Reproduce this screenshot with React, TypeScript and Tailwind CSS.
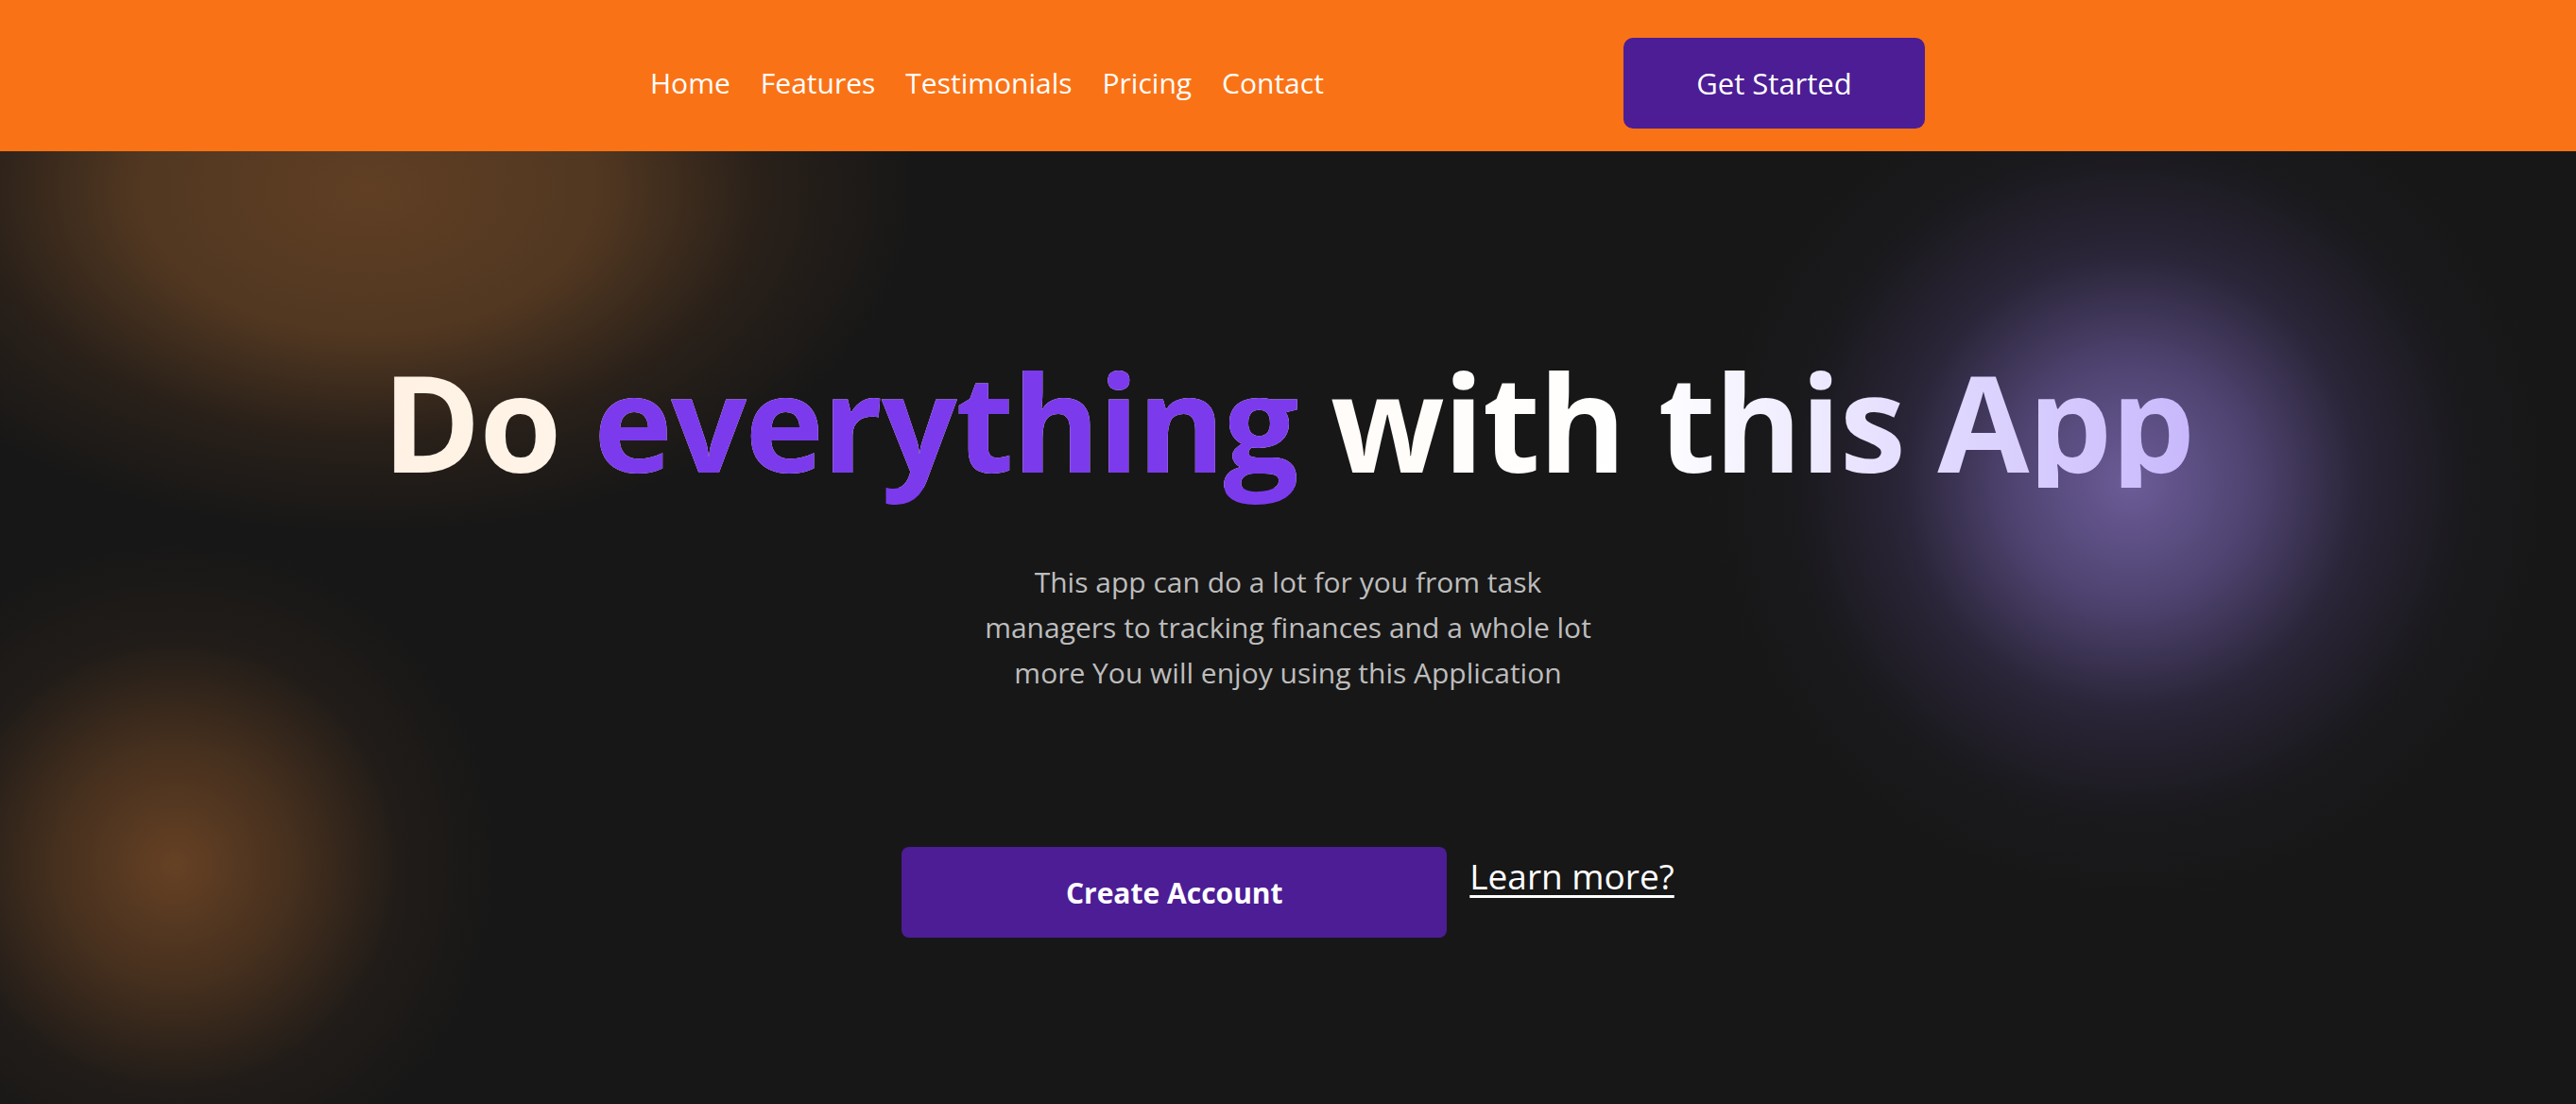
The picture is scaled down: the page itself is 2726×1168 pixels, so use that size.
const links = ['Home', 'Features', 'Testimonials', 'Pricing', 'Contact']

export default function App() {
  return (
    <div className="h-[1168px] w-full overflow-hidden bg-[#171717] font-['Open_Sans','Noto_Sans',sans-serif]">
      {/* Nav */}
      <nav className="relative z-10 flex h-[160px] items-center bg-[#f97316] pt-[16px]">
        <div className="flex w-[1718px] items-center gap-[32px] pl-[688px]">
          {links.map((l) => (
            <a key={l} href="#" className="text-[30px] leading-none text-white">
              {l}
            </a>
          ))}
        </div>
        <button className="h-[96px] w-[319px] rounded-[10px] bg-[#4c1d95] text-[31px] text-white">
          Get Started
        </button>
      </nav>

      {/* Hero */}
      <section className="relative flex h-[1008px] flex-col items-center">
        {/* glow blobs */}
        <div className="pointer-events-none absolute left-[-180px] top-[-320px] h-[720px] w-[1140px] bg-[radial-gradient(ellipse_at_center,rgba(96,63,36,1)_0%,rgba(88,59,34,0.9)_30%,rgba(55,39,27,0.55)_52%,rgba(23,23,23,0)_72%)]" />
        <div className="pointer-events-none absolute left-[-165px] top-[405px] h-[700px] w-[700px] bg-[radial-gradient(circle_at_center,rgba(102,65,36,1)_0%,rgba(84,55,32,0.75)_26%,rgba(45,34,26,0.45)_48%,rgba(23,23,23,0)_70%)]" />
        <div className="pointer-events-none absolute left-[1805px] top-[-100px] h-[900px] w-[900px] bg-[radial-gradient(circle_at_center,rgba(108,92,152,1)_0%,rgba(88,75,128,0.85)_20%,rgba(55,46,78,0.6)_38%,rgba(32,29,40,0.3)_56%,rgba(23,23,23,0)_72%)]" />

        <h1 className="relative mt-[215px] whitespace-nowrap bg-gradient-to-r from-[#fff2e4] via-white via-70% to-[#c8b8fc] bg-clip-text text-center text-[141px] font-bold leading-none tracking-[-0.011em] text-transparent">
          Do <span className="text-[#7c3aed]">everything</span> with this App
        </h1>

        <p className="relative mt-[76px] w-[650px] text-center text-[30px] leading-[48px] text-[#bdbdbd]">
          This app can do a lot for you from task managers to tracking finances and a whole lot more You will enjoy using this Application
        </p>

        <div className="relative mt-[160px] flex items-start gap-[24px]">
          <button className="h-[96px] w-[577px] rounded-[8px] bg-[#4c1d95] text-[30px] font-bold text-white">
            Create Account
          </button>
          <a href="#" className="mt-[5px] text-[37px] leading-[52px] text-white underline decoration-[3px] underline-offset-[6px]">
            Learn more?
          </a>
        </div>
      </section>
    </div>
  )
}
